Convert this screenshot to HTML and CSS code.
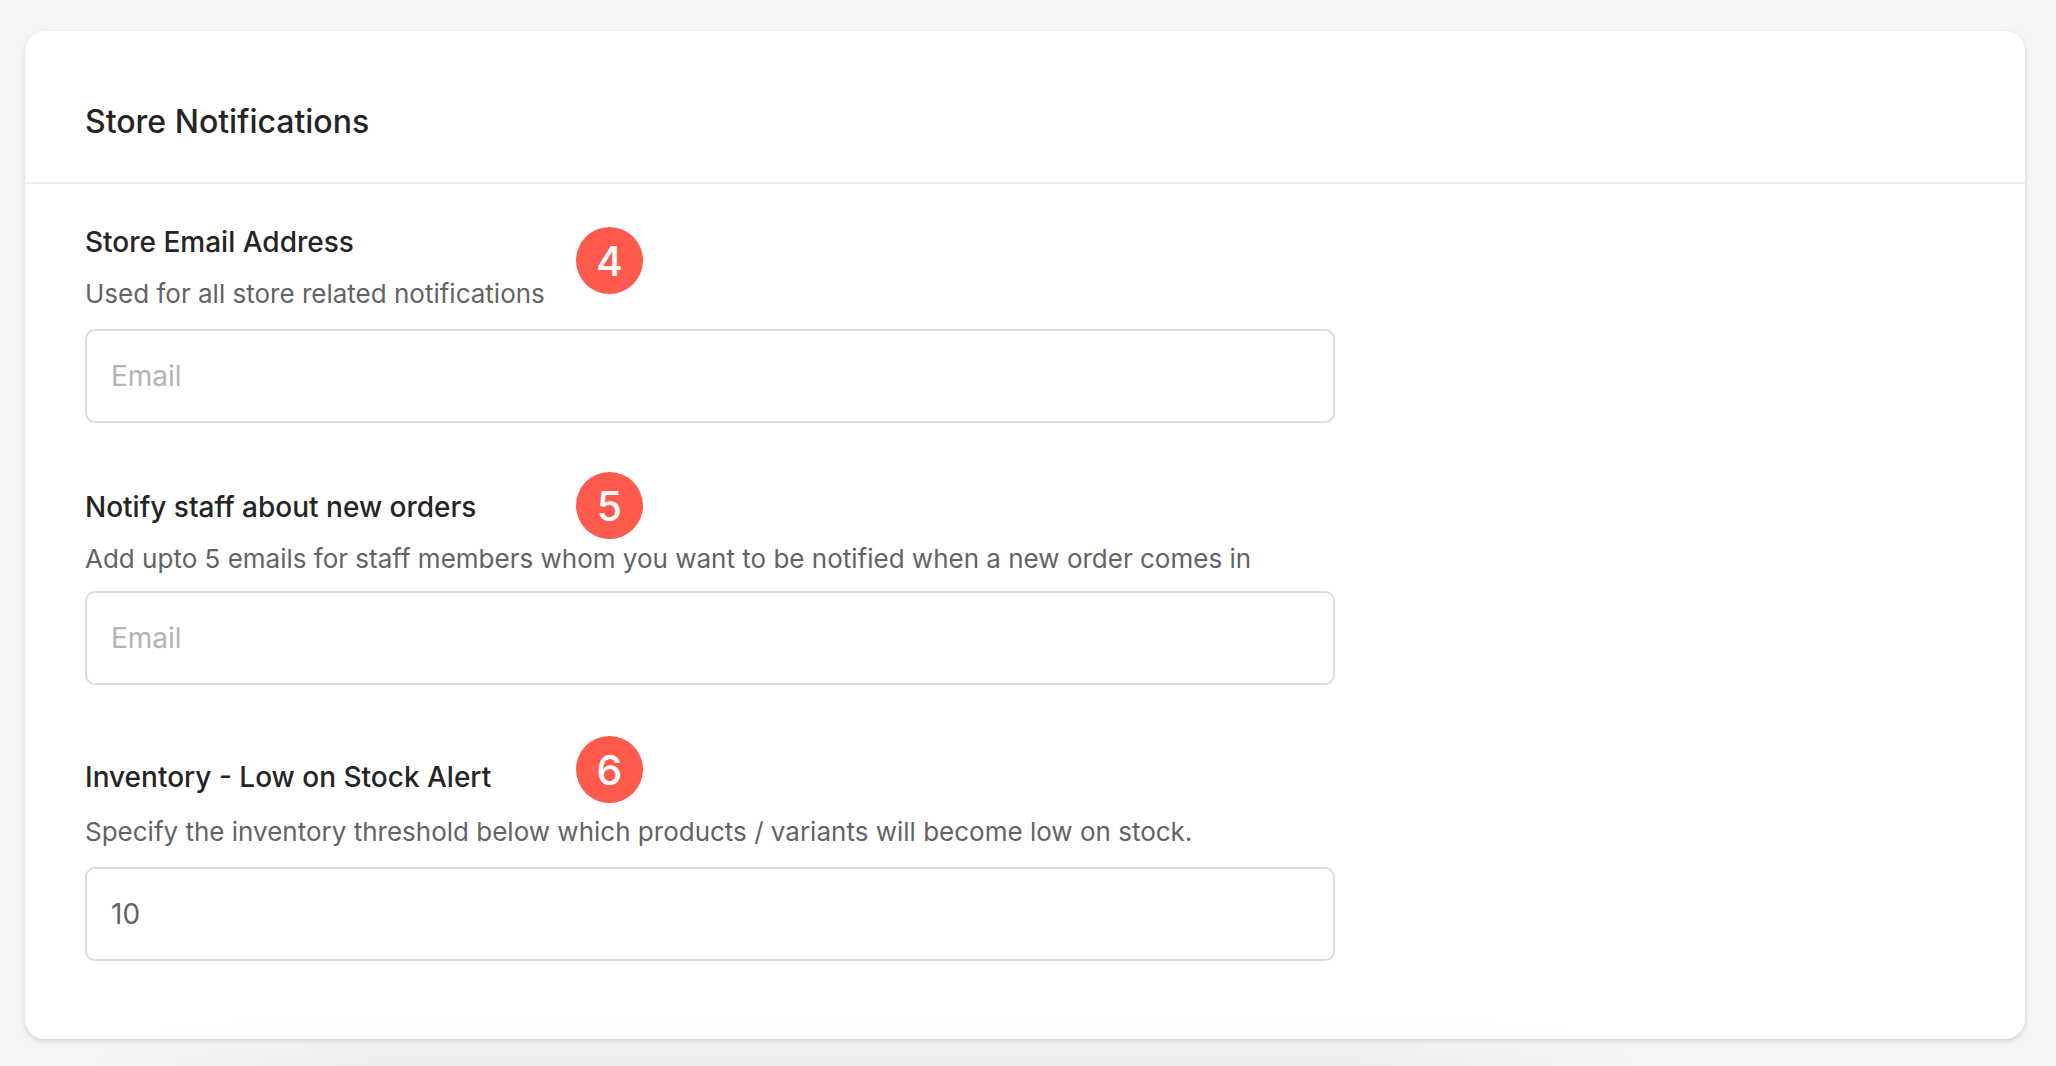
FILE: index.html
```html
<!DOCTYPE html>
<html lang="en">
<head>
    <meta charset="UTF-8">
    <meta name="viewport" content="width=device-width, initial-scale=1.0">
    <title>Store Notifications</title>
    <link rel="stylesheet" href="styles.css">
</head>
<body>
    <main class="card">
        <header class="card-header">
            <h1>Store Notifications</h1>
        </header>

        <form class="card-body">
            <div class="field">
                <label for="store-email">Store Email Address</label>
                <p class="hint" id="store-email-hint">Used for all store related notifications</p>
                <input type="email" id="store-email" placeholder="Email" aria-describedby="store-email-hint">
                <span class="step step-email">4</span>
            </div>

            <div class="field field-staff">
                <label for="staff-email">Notify staff about new orders</label>
                <p class="hint" id="staff-email-hint">Add upto 5 emails for staff members whom you want to be notified when a new order comes in</p>
                <input type="email" id="staff-email" placeholder="Email" aria-describedby="staff-email-hint">
                <span class="step step-staff">5</span>
            </div>

            <div class="field field-stock">
                <label for="low-stock">Inventory - Low on Stock Alert</label>
                <p class="hint" id="low-stock-hint">Specify the inventory threshold below which products / variants will become low on stock.</p>
                <input type="text" inputmode="numeric" id="low-stock" value="10" aria-describedby="low-stock-hint">
                <span class="step step-stock">6</span>
            </div>
        </form>
    </main>
    <div class="page-shade"></div>
</body>
</html>
```

FILE: styles.css
```css
* {
    box-sizing: border-box;
}

body {
    font-family: Inter, "Liberation Sans", sans-serif;
    background-color: #f5f5f5;
    color: #252525;
    margin: 0;
    padding: 31px 31px 27px 25px;
}

.card {
    background: white;
    border-radius: 20px;
    box-shadow: 0 2px 5px rgba(0, 0, 0, 0.14);
}

.card-header {
    padding: 71px 60px 40px;
    border-bottom: 2px solid #ededed;
}

h1 {
    margin: 0;
    font-size: 32px;
    line-height: 40px;
    font-weight: 500;
}

.card-body {
    display: flex;
    flex-direction: column;
    gap: 64px;
    padding: 38px 60px 78px;
}

.field {
    position: relative;
    display: flex;
    flex-direction: column;
    max-width: 1250px;
}

.field-stock {
    margin-top: 8px;
}

label {
    font-size: 28px;
    line-height: 40px;
    font-weight: 500;
}

.hint {
    margin: 13px 0 16px;
    font-size: 26px;
    line-height: 38px;
    color: #636363;
}

.field-staff .hint {
    margin-bottom: 13px;
}

.field-stock .hint {
    margin-top: 16px;
}

input {
    height: 94px;
    padding: 0 24px;
    border: 2px solid #dcdcdc;
    border-radius: 10px;
    background: white;
    font-family: inherit;
    font-size: 28px;
    color: #636363;
}

input::placeholder {
    color: #b3b3b3;
}

/* numbered markers over the form */
.step {
    position: absolute;
    left: 491px;
    width: 67px;
    height: 67px;
    border-radius: 50%;
    background: #ff5a4c;
    color: white;
    font-size: 41px;
    line-height: 69px;
    font-weight: 500;
    text-align: center;
}

.step-email {
    top: 5px;
}

.step-staff {
    top: -15px;
}

.step-stock {
    top: -21px;
}

/* soft shade rising from the bottom edge */
.page-shade {
    position: fixed;
    left: 4%;
    bottom: 0;
    width: 76%;
    height: 50px;
    background: linear-gradient(to top, rgba(0, 0, 0, 0.03), transparent);
    -webkit-mask-image: linear-gradient(to right, transparent, black 20%, black 80%, transparent);
    mask-image: linear-gradient(to right, transparent, black 20%, black 80%, transparent);
    pointer-events: none;
}
```
